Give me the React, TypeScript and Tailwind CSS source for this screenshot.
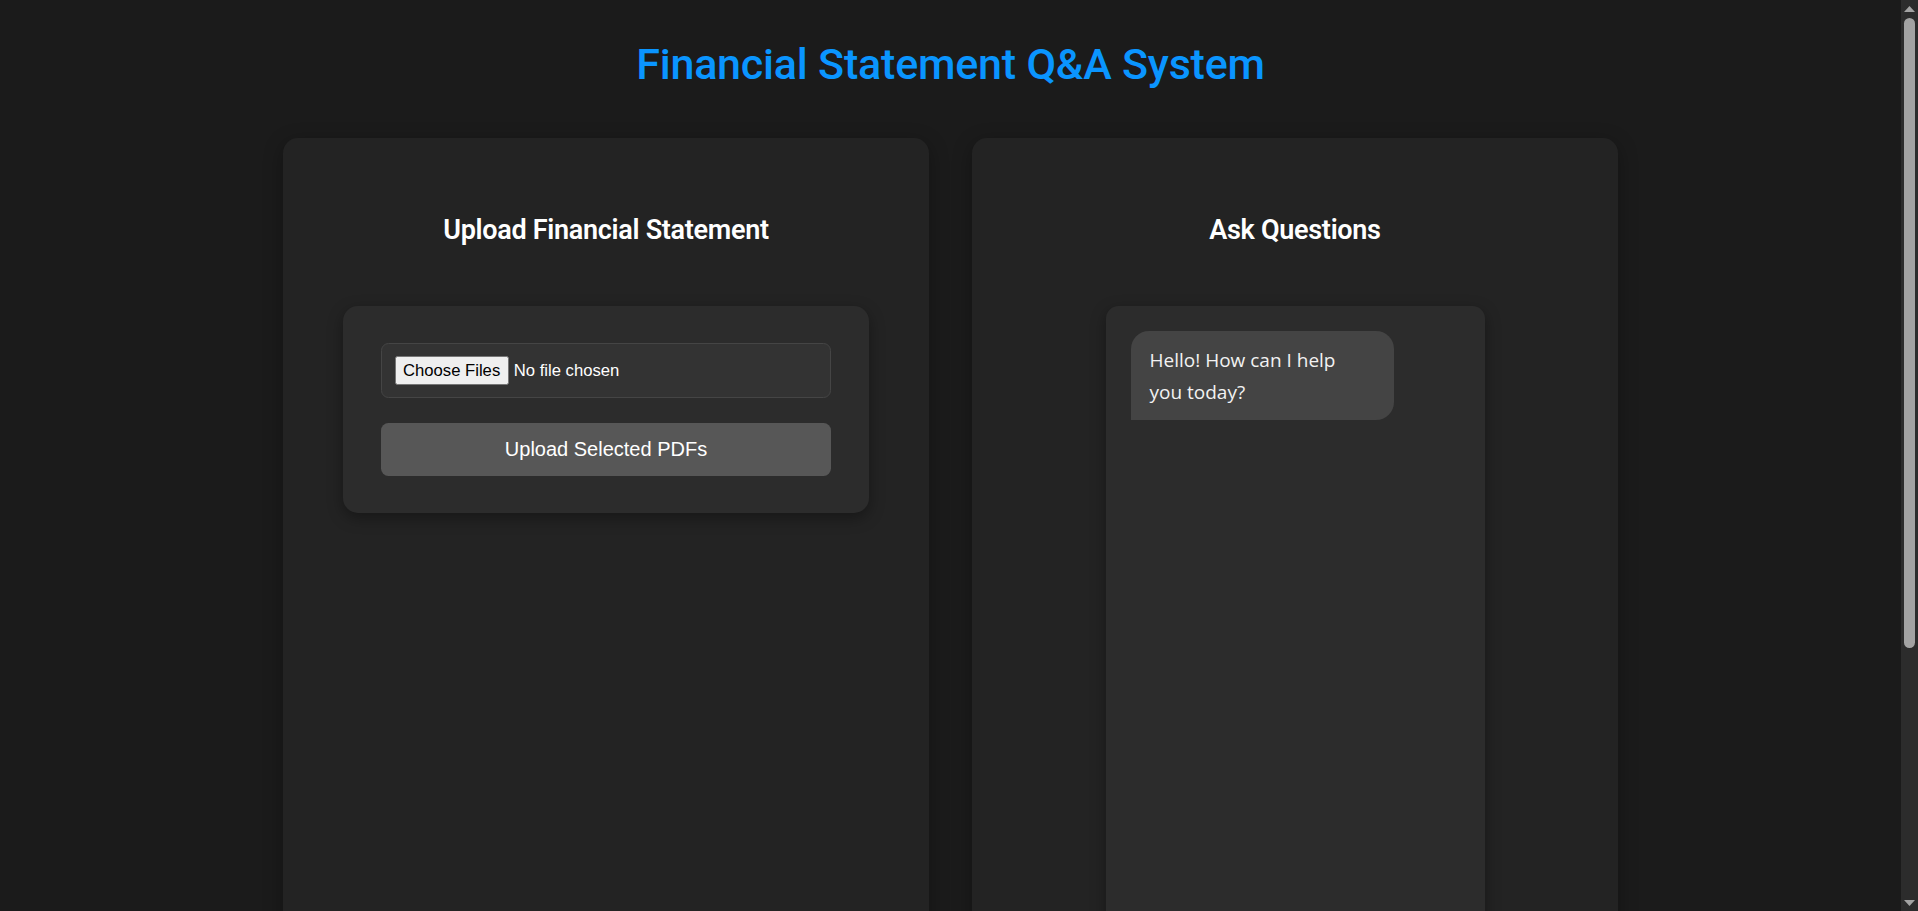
function ScrollBar() {
  return (
    <div className="flex h-screen w-[17px] shrink-0 flex-col items-center bg-[#2c2c2c]">
      <div className="flex h-[17px] w-full items-center justify-center">
        <svg width="11" height="6" viewBox="0 0 11 6">
          <path d="M0 6 L5.5 0 L11 6 Z" fill="#a3a3a3" />
        </svg>
      </div>
      <div className="mt-[1px] h-[630px] w-[11px] rounded-full bg-[#a3a3a3]" />
      <div className="flex-1" />
      <div className="flex h-[17px] w-full items-center justify-center">
        <svg width="11" height="6" viewBox="0 0 11 6">
          <path d="M0 0 L11 0 L5.5 6 Z" fill="#a3a3a3" />
        </svg>
      </div>
    </div>
  );
}

export default function App() {
  return (
    <div className="flex h-screen overflow-hidden bg-[#1b1b1b] font-['Roboto',sans-serif]">
      <main className="h-screen flex-1 overflow-hidden">
        <div className="pt-[39px] pb-[40px]">
          <h1 className="mb-[47.8px] text-center text-[43px] leading-[1.2] font-medium tracking-[-0.2px] text-[#0a95ff]">
            Financial Statement Q&amp;A System
          </h1>
          <div className="mx-auto grid w-[1335px] grid-cols-2 gap-[43px]">
            <section className="h-[1089px] rounded-[15px] bg-[#232323] px-[60px] pt-[75.5px] shadow-[0_5px_20px_rgba(0,0,0,0.3)]">
              <h2 className="mb-[60.1px] text-center text-[27px] leading-[1.2] font-semibold tracking-[-0.3px] text-white">
                Upload Financial Statement
              </h2>
              <div className="flex flex-col gap-[25px] rounded-[15px] bg-[#2c2c2c] px-[38px] py-[37px] shadow-[0_5px_15px_rgba(0,0,0,0.35)]">
                <input
                  type="file"
                  multiple
                  accept=".pdf"
                  className="block w-full rounded-[7.5px] border border-solid border-[#454545] bg-[#333333] px-[12.5px] py-[11.5px] font-['Liberation_Sans',Arial,sans-serif] text-[16.67px] text-white [color-scheme:light] file:mr-[5px] file:rounded-[2.5px] file:border file:border-solid file:border-[#767676] file:bg-[#efefef] file:px-[7.5px] file:py-[1.25px] file:text-black"
                />
                <button className="h-[53px] w-full rounded-[7.5px] bg-[#575757] font-['Liberation_Sans',Arial,sans-serif] text-[20px] text-white">
                  Upload Selected PDFs
                </button>
              </div>
            </section>
            <section className="h-[1089px] rounded-[15px] bg-[#232323] px-[60px] pt-[75.5px] shadow-[0_5px_20px_rgba(0,0,0,0.3)]">
              <h2 className="mb-[60.1px] text-center text-[27px] leading-[1.2] font-semibold tracking-[-0.3px] text-white">
                Ask Questions
              </h2>
              <div className="mx-auto flex h-[700px] w-[379px] flex-col rounded-[12.5px] bg-[#2c2c2c] p-[25px] shadow-[0_5px_15px_rgba(0,0,0,0.35)]">
                <div className="w-[80%] rounded-[18px] rounded-bl-none bg-[#444444] py-[12.5px] pr-[40px] pl-[19px] font-['Open_Sans',sans-serif] text-[19px] leading-[32px] text-[#f2f2f2]">
                  Hello! How can I help you today?
                </div>
              </div>
            </section>
          </div>
        </div>
      </main>
      <ScrollBar />
    </div>
  );
}
